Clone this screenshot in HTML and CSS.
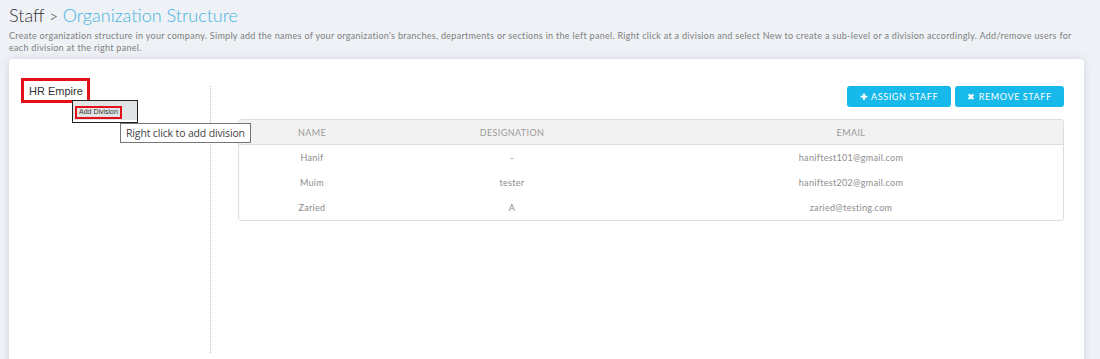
FILE: index.html
```html
<!DOCTYPE html>
<html lang="en">
<head>
  <meta charset="UTF-8">
  <title>Staff - Organization Structure</title>
  <link rel="stylesheet" href="styles.css">
</head>
<body>

  <div class="page-head">
    <h1 class="titulo">Staff <span class="seta">&gt;</span> <span class="sub">Organization Structure</span></h1>
    <p class="descricao">Create organization structure in your company. Simply add the names of your organization's branches, departments or sections in the left panel. Right click at a division and select New to create a sub-level or a division accordingly. Add/remove users for each division at the right panel.</p>
  </div>

  <div class="card">
    <div class="arvore">
      <div class="no-raiz destacado">HR Empire</div>

      <div class="menu-contexto">
        <div class="menu-item"><span class="destacado-fino">Add Division</span></div>
      </div>
      <div class="dica">Right click to add division</div>
    </div>

    <div class="divisor"></div>

    <div class="painel">
      <div class="acoes">
        <button class="btn">&#10010; ASSIGN STAFF</button>
        <button class="btn">&#10006; REMOVE STAFF</button>
      </div>

      <table class="tabela">
        <thead>
          <tr>
            <th class="col-nome">NAME</th>
            <th class="col-cargo">DESIGNATION</th>
            <th>EMAIL</th>
          </tr>
        </thead>
        <tbody>
          <tr><td>Hanif</td><td>-</td><td>haniftest101@gmail.com</td></tr>
          <tr><td>Muim</td><td>tester</td><td>haniftest202@gmail.com</td></tr>
          <tr><td>Zaried</td><td>A</td><td>zaried@testing.com</td></tr>
        </tbody>
      </table>
    </div>
  </div>

</body>
</html>
```

FILE: styles.css
```css
body {
  margin: 0;
  padding: 0 16px 0 9px;
  background-color: #eef1f5;
  font-family: Lato, "Open Sans", sans-serif;
  color: #555;
  overflow: hidden;
}

.page-head {
  padding-top: 3px;
}

.titulo {
  margin: 0;
  font-size: 18px;
  font-weight: 300;
  color: #333;
  line-height: 24px;
}

.titulo .seta {
  font-size: 15px;
}

.titulo .sub {
  color: #45b4e0;
}

.descricao {
  margin: 2px 0 0 0;
  font-size: 9px;
  line-height: 12px;
  letter-spacing: 0.3px;
  color: #808080;
}

.card {
  margin-top: 5px;
  background-color: #fff;
  border-radius: 4px;
  box-shadow: 0 0 8px rgba(0, 0, 0, 0.12);
  display: flex;
  padding: 19px 0 16px 0;
  height: 310px;
  box-sizing: border-box;
}

/* painel da arvore */
.arvore {
  position: relative;
  width: 201px;
  padding-left: 12px;
  box-sizing: border-box;
}

.no-raiz {
  display: inline-block;
  font-family: "Liberation Sans", sans-serif;
  font-size: 11px;
  color: #333;
  padding: 2px 4px 1px 5px;
  line-height: 16px;
}

.destacado {
  border: 3px solid #e3101b;
}

.menu-contexto {
  position: absolute;
  left: 63px;
  top: 22px;
  width: 64px;
  height: 21px;
  border: 1px solid #222;
  background-color: #fff;
}

.menu-item {
  display: flex;
  background-color: #e1e4e4;
  padding: 5px 0 1px 2px;
  height: 13px;
}

.destacado-fino {
  display: block;
  border: 2px solid #e3101b;
  font-family: "Liberation Sans", sans-serif;
  font-size: 7px;
  line-height: 8px;
  color: #333;
  padding: 0 2px;
}

.dica {
  position: absolute;
  left: 111px;
  top: 45px;
  z-index: 5;
  background-color: #fff;
  border: 1px solid #767676;
  font-family: "Open Sans", sans-serif;
  font-size: 10.5px;
  letter-spacing: -0.15px;
  line-height: 18px;
  color: #444;
  padding: 0 5px;
  white-space: nowrap;
}

.divisor {
  margin-top: 8px;
  border-left: 1px dotted #bbb;
}

/* painel da direita */
.painel {
  flex: 1;
  margin-top: 8px;
  padding: 0 20px 0 27px;
}

.acoes {
  display: flex;
  justify-content: flex-end;
  gap: 4px;
}

.btn {
  background-color: #17b8ea;
  color: #fff;
  border: none;
  border-radius: 3px;
  font-family: Lato, sans-serif;
  font-size: 9px;
  letter-spacing: 0.6px;
  height: 21px;
  padding: 0 12px;
  cursor: pointer;
}

.btn:first-child {
  width: 104px;
}

.btn:last-child {
  width: 109px;
}

.tabela {
  margin-top: 12px;
  width: 826px;
  border-collapse: separate;
  border-spacing: 0;
  border: 1px solid #ddd;
  border-radius: 3px;
  font-size: 9px;
  color: #8c8c8c;
  text-align: center;
}

.tabela th {
  background-color: #f2f2f2;
  font-weight: 400;
  color: #9a9a9a;
  height: 24px;
  padding: 0;
  border-bottom: 1px solid #ddd;
  letter-spacing: 0.4px;
}

.col-nome {
  width: 146px;
}

.col-cargo {
  width: 254px;
}

.tabela td {
  height: 25px;
  padding: 0;
  letter-spacing: 0.3px;
}
```
